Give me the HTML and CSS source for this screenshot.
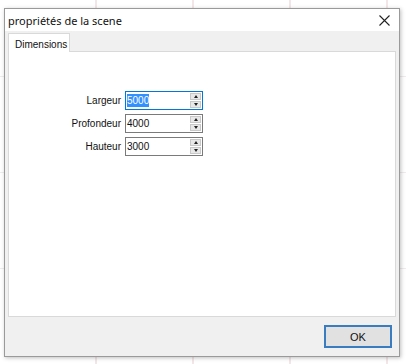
FILE: index.html
```html
<!DOCTYPE html>
<html>
<head>
  <meta charset="utf-8">
  <title>propriétés de la scene</title>
  <link rel="stylesheet" href="styles.css">
</head>
<body>
  <div class="fenetre">
    <div class="titre">
      <span class="titre-texte">propriétés de la scene</span>
      <span class="fermer">
        <svg width="11" height="11" viewBox="0 0 11 11">
          <path d="M0.5 0.5 L10.5 10.5 M10.5 0.5 L0.5 10.5" stroke="#222" stroke-width="1.1" fill="none"/>
        </svg>
      </span>
    </div>
    <div class="corps">
      <div class="onglets">
        <div class="onglet actif">Dimensions</div>
      </div>
      <div class="panneau">
        <div class="champs">
          <label>Largeur</label>
          <div class="spin focus">
            <span class="valeur"><span class="selection">5000</span></span>
            <span class="fleches"><span class="haut"></span><span class="bas"></span></span>
          </div>
          <label>Profondeur</label>
          <div class="spin">
            <span class="valeur">4000</span>
            <span class="fleches"><span class="haut"></span><span class="bas"></span></span>
          </div>
          <label>Hauteur</label>
          <div class="spin">
            <span class="valeur">3000</span>
            <span class="fleches"><span class="haut"></span><span class="bas"></span></span>
          </div>
        </div>
      </div>
      <div class="actions">
        <button type="button" class="ok">OK</button>
      </div>
    </div>
  </div>
</body>
</html>
```

FILE: styles.css
```css
html, body {
  height: 100%;
}
body {
  margin: 0;
  padding: 8px 6px 7px 4px;
  box-sizing: border-box;
  font-family: "Liberation Sans", Arial, sans-serif;
  font-size: 10px;
  background-color: #fff;
  background-image:
    repeating-linear-gradient(90deg, transparent 0 95px, #f3e6e8 95px 97px),
    repeating-linear-gradient(0deg, transparent 0 95px, #f1ecec 95px 96px);
}
.fenetre {
  width: 396px;
  height: 349px;
  box-sizing: border-box;
  border: 1px solid #9a9a9a;
  background: #f0f0f0;
  display: flex;
  flex-direction: column;
  box-shadow: 1px 1px 4px rgba(0, 0, 0, 0.25);
}
.titre {
  height: 22px;
  background: #fff;
  display: flex;
  align-items: center;
  justify-content: space-between;
  padding: 0 9px 0 3px;
}
.titre-texte {
  font-family: "Noto Sans", sans-serif;
  font-size: 11px;
  color: #111;
}
.fermer {
  display: flex;
}
.corps {
  flex: 1;
  display: flex;
  flex-direction: column;
  padding: 2px 3px 0 3px;
}
.onglets {
  display: flex;
  height: 19px;
}
.onglet {
  width: 62px;
  box-sizing: border-box;
  border: 1px solid #d9d9d9;
  border-bottom: none;
  background: #fff;
  padding: 5px 0 0 6px;
  color: #111;
  position: relative;
  z-index: 1;
}
.panneau {
  height: 266px;
  box-sizing: border-box;
  border: 1px solid #d9d9d9;
  background: #fff;
  margin-top: -1px;
}
.champs {
  display: grid;
  grid-template-columns: 108px 78px;
  column-gap: 4px;
  row-gap: 4px;
  align-items: center;
  justify-items: end;
  margin: 39px 0 0 4px;
}
.champs label {
  color: #111;
}
.spin {
  width: 78px;
  height: 19px;
  box-sizing: border-box;
  border: 1px solid #7a7a7a;
  display: flex;
  align-items: stretch;
  background: #fff;
}
.spin.focus {
  border-color: #0078d7;
}
.valeur {
  flex: 1;
  display: flex;
  align-items: center;
  padding-left: 1px;
  color: #111;
}
.selection {
  background: #3390ff;
  color: #fff;
  padding: 1px 0;
}
.fleches {
  width: 11px;
  margin: 1px 1px 1px 0;
  display: flex;
  flex-direction: column;
  gap: 1px;
}
.fleches span {
  flex: 1;
  background: #e8e8e8;
  border: 1px solid #c8c8c8;
  display: flex;
  align-items: center;
  justify-content: center;
}
.fleches span::after {
  content: "";
  border-left: 2.5px solid transparent;
  border-right: 2.5px solid transparent;
}
.fleches .haut::after {
  border-bottom: 3px solid #222;
}
.fleches .bas::after {
  border-top: 3px solid #222;
}
.actions {
  display: flex;
  justify-content: flex-end;
  padding: 8px 4px 0 0;
}
.ok {
  width: 68px;
  height: 23px;
  box-sizing: border-box;
  border: 2px solid #3a7cc0;
  background: #e1e1e1;
  font-family: "Liberation Sans", Arial, sans-serif;
  font-size: 11px;
  color: #111;
  padding: 0;
}
```
